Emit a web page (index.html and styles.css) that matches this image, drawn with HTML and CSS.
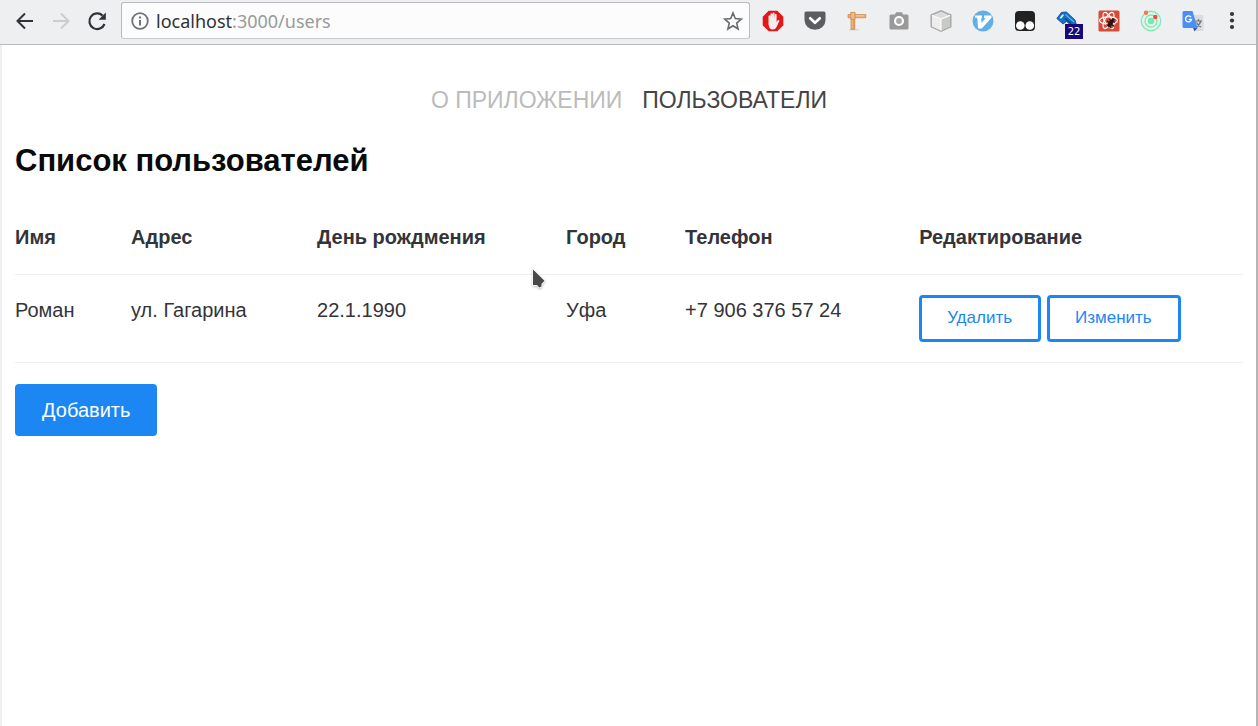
FILE: index.html
```html
<!DOCTYPE html>
<html lang="ru">
<head>
<meta charset="utf-8">
<title>Список пользователей</title>
<link rel="stylesheet" href="styles.css">
</head>
<body>
<div class="window">
  <header class="toolbar">
    <button class="tool back" aria-label="Назад"><svg width="20" height="20" viewBox="0 0 20 20"><path d="M18 10H2.500M10 2.500 2.500 10l7.500 7.500" fill="none" stroke="currentColor" stroke-width="2"/></svg></button>
    <button class="tool forward" aria-label="Вперёд" disabled><svg width="20" height="20" viewBox="0 0 20 20"><path d="M2 10h15.500M10 2.500l7.500 7.500-7.500 7.500" fill="none" stroke="currentColor" stroke-width="2"/></svg></button>
    <button class="tool reload" aria-label="Обновить"><svg width="20" height="20" viewBox="0 0 20 20"><path d="M15.600 4.600A7.800 7.800 0 1 0 17.500 13" fill="none" stroke="currentColor" stroke-width="2.200"/><path d="M18.800 1.500v7.200h-7.200z" fill="currentColor"/></svg></button>
    <div class="address">
      <svg width="20" height="20" viewBox="0 0 20 20"><circle cx="10" cy="10" r="7.800" fill="none" stroke="#6f7378" stroke-width="1.800"/><path d="M10 5.500v2M10 9v5.500" stroke="#6f7378" stroke-width="2"/></svg>
      <a class="url" href="#">localhost<span class="path">:3000/users</span></a>
      <button class="tool star" aria-label="В закладки"><svg width="20" height="20" viewBox="0 0 20 20"><path d="M10 2l2.300 5.600 6 .5-4.600 4 1.400 5.900-5.100-3.200L4.900 18l1.400-5.900-4.600-4 6-.5z" fill="none" stroke="#686b70" stroke-width="1.600"/></svg></button>
    </div>
    <div class="extensions">
      <button class="tool" aria-label="AdBlock"><svg width="22" height="22" viewBox="0 0 22 22"><path d="M6.700 .7h8.600l6 6v8.600l-6 6H6.700l-6-6V6.700z" fill="#e31717"/><path d="M6.500 14V6.200q.9-1.700 1.800 0V9l.2-5q.9-1.600 1.900 0v4.600l.2-5.500q.9-1.200 1.900 0V9l.3-4.600q.9-1.200 1.800 0V12l1.300-1.700q1.600-.7 1.400.7l-2.600 5.700q-1.200 2.800-4 2.800-3.800 0-4.200-5.500z" fill="#f6eeee"/></svg></button>
      <button class="tool" aria-label="Pocket"><svg width="22" height="22" viewBox="0 0 22 22"><path d="M2 1.500h18q1.500 0 1.500 1.500v7a10.500 9.800 0 0 1-21 0V3Q.5 1.500 2 1.500z" fill="#5b5d60"/><path d="M6.200 8.300 11 12.800l4.800-4.500" fill="none" stroke="#fff" stroke-width="2.700" stroke-linecap="round" stroke-linejoin="round"/></svg></button>
      <button class="tool" aria-label="Линейка"><svg width="22" height="22" viewBox="0 0 22 22"><path d="M3 19.800h10" stroke="#d2cbc5" stroke-width="1"/><path d="M5 2.500h3.800v16.800H5z" fill="#e2a062" stroke="#bb793f" stroke-width=".6"/><path d="M2 4.500h17.800v3.300H2z" fill="#e9ae72" stroke="#c9854b" stroke-width=".7"/><path d="M4.800 2.300h4.200v7H4.800z" fill="#edba83" stroke="#c9854b" stroke-width=".6"/><path d="M10 5.800h8" stroke="#f5cb9d"/><path d="M6.200 10v8.500" stroke="#f1bd87"/></svg></button>
      <button class="tool" aria-label="Снимок"><svg width="22" height="22" viewBox="0 0 22 22"><path d="M3 4.500h4l1-2.200h6l1 2.200h4q1.500 0 1.500 1.500v12q0 1.500-1.500 1.500H3Q1.500 19.500 1.500 18V6Q1.500 4.500 3 4.500z" fill="#999"/><circle cx="11" cy="11" r="4" fill="#aaa" stroke="#fff" stroke-width="2.200"/></svg></button>
      <button class="tool" aria-label="Куб"><svg width="22" height="22" viewBox="0 0 22 22"><path d="M11 .8 20.800 5v11.800L11 21.200 1.200 16.800V5z" fill="#dcdcdb" stroke="#aaa" stroke-width="1.500"/><path d="M2 5.400 11 9v11.500l-9-4z" fill="#ededeb"/><path d="M11 9l9-3.600v11.100l-9 4z" fill="#c9c9c8"/><path d="M2 5.400 11 9l9-3.600M11 9v11.500" fill="none" stroke="#fafafa" stroke-width="1.200"/></svg></button>
      <button class="tool" aria-label="Vimium"><svg width="22" height="22" viewBox="0 0 22 22"><circle cx="11" cy="11" r="10.500" fill="#61b0e5"/><path d="M3 5.500h7v2.200H9.300l.2 5.500L13.500 8H12V5.500h7.500v2.200L9.800 18.500H6L5.300 7.700H3z" fill="#fff"/></svg></button>
      <button class="tool" aria-label="Tampermonkey"><svg width="22" height="22" viewBox="0 0 22 22"><rect x="1" y="1" width="20" height="20" rx="4" fill="#222"/><circle cx="6.300" cy="15.500" r="4.300" fill="#fff"/><circle cx="15.800" cy="15.500" r="4.300" fill="#fff"/></svg></button>
      <button class="tool keys" aria-label="Счётчик: 22"><svg width="22" height="22" viewBox="0 0 22 22"><path d="M.8 8.500 5.500 2.300l5-.3 8.500 8 1.500 5-4 1.500-6-5-3.500 2.500z" fill="#126fc6" stroke="#0b4d8f" stroke-width=".8" stroke-linejoin="round"/><path d="M3.500 8 6.300 4.500l1.800.3-2.800 4z" fill="#e9f4fb"/><path d="M9.500 4.500l8.500 7.500" stroke="#5eb0ef" stroke-width="1.300"/><path d="M9 8.500l6 5" stroke="#083d78" stroke-width="1.200"/></svg><span class="badge">22</span></button>
      <button class="tool" aria-label="React"><svg width="22" height="22" viewBox="0 0 22 22"><rect x=".5" y=".5" width="21" height="21" rx="1.500" fill="#d84b37"/><g fill="none" stroke="#fff" stroke-width="1.200"><ellipse cx="10.500" cy="10.500" rx="9" ry="3.700"/><ellipse cx="10.500" cy="10.500" rx="9" ry="3.700" transform="rotate(60 10.500 10.500)"/><ellipse cx="10.500" cy="10.500" rx="9" ry="3.700" transform="rotate(120 10.500 10.500)"/></g><ellipse cx="12.500" cy="13.500" rx="2.200" ry="4" transform="rotate(35 12.500 13.500)" fill="#241515"/><circle cx="15" cy="9.500" r="1.600" fill="#241515"/><path d="M9 11l7.500 5.500M11 9.500l6 3M8.500 14.500l5 3.500" stroke="#241515" stroke-width="1.100"/></svg></button>
      <button class="tool" aria-label="Орбита"><svg width="22" height="22" viewBox="0 0 22 22"><g fill="none" stroke="#7deeb3" stroke-width="1.400"><circle cx="11" cy="11" r="9.700"/><circle cx="11" cy="11" r="6"/></g><circle cx="11" cy="11" r="3.300" fill="#72edac"/><circle cx="6" cy="2.700" r="2.200" fill="#ff744c"/><circle cx="15.300" cy="7" r="2.200" fill="#f24a3b"/></svg></button>
      <button class="tool" aria-label="Переводчик"><svg width="22" height="22" viewBox="0 0 22 22"><path d="M10 5h10q1.500 0 1.500 1.500V21H14z" fill="#d9dbdd"/><path d="M13 11h7M16.500 9v2m2.300 0q-1 4-5 6.500M14.500 12.500q1.500 3 4.500 4.500" fill="none" stroke="#69747b" stroke-width="1.200"/><path d="M11 18h4.500L12.500 21.500z" fill="#3454b7"/><path d="M2 1h8.500l5 17H2Q.5 18 .5 16.500v-14Q.5 1 2 1z" fill="#4c8df6"/><path d="M9 7.200A3 3 0 1 0 9.500 9.500H6.800" fill="none" stroke="#fff" stroke-width="1.300"/></svg></button>
      <button class="tool menu" aria-label="Меню"><svg width="16" height="22" viewBox="0 0 16 22"><g fill="#333639"><circle cx="8" cy="4" r="2.100"/><circle cx="8" cy="10.500" r="2.100"/><circle cx="8" cy="17" r="2.100"/></g></svg></button>
    </div>
  </header>

  <main class="page">
    <nav class="nav">
      <a class="nav-link" href="#">О ПРИЛОЖЕНИИ</a>
      <a class="nav-link active" href="#" aria-current="page">ПОЛЬЗОВАТЕЛИ</a>
    </nav>
    <h1 class="title">Список пользователей</h1>
    <table class="users">
      <colgroup><col class="c-name"><col class="c-address"><col class="c-birthday"><col class="c-city"><col class="c-phone"><col></colgroup>
      <thead>
        <tr><th scope="col">Имя</th><th scope="col">Адрес</th><th scope="col">День рождмения</th><th scope="col">Город</th><th scope="col">Телефон</th><th scope="col">Редактирование</th></tr>
      </thead>
      <tbody>
        <tr>
          <td>Роман</td><td>ул. Гагарина</td><td>22.1.1990</td><td>Уфа</td><td>+7 906 376 57 24</td>
          <td><div class="actions"><button class="btn outline">Удалить</button><button class="btn outline">Изменить</button></div></td>
        </tr>
      </tbody>
    </table>
    <button class="btn primary">Добавить</button>
  </main>
</div>
<svg class="cursor" width="16" height="24" viewBox="0 0 16 24" aria-hidden="true"><path d="M2 1.500V17h4l2.200 2.500 2.300-1V15.500h.5l2.500-2.800z" fill="#484848" stroke="#fff" stroke-width="1.500" paint-order="stroke"/></svg>
</body>
</html>
```

FILE: styles.css
```css
* { box-sizing: border-box; }

body {
  margin: 0;
  background: #fff;
  color: #333439;
  font-family: "Liberation Sans", Arial, sans-serif;
  font-size: 20px;
  line-height: 30px;
}

button {
  font-family: inherit;
  cursor: pointer;
}

.window {
  min-height: 100vh;
  display: flex;
  flex-direction: column;
  border-right: 2px solid #b5b5b5;
}

.toolbar {
  display: flex;
  align-items: center;
  height: 45px;
  padding: 0 16px 3px 15px;
  background: #eeeff1;
  border-bottom: 1px solid #b9babe;
}

.tool {
  display: flex;
  flex: none;
  padding: 0;
  border: 0;
  background: none;
  color: #2f3237;
}

.tool svg, .address svg { display: block; flex: none; }
.forward { margin-left: 16px; color: #cbccce; }
.reload { margin-left: 16px; }

.address {
  display: flex;
  align-items: center;
  flex: 1;
  height: 37px;
  margin-left: 14px;
  padding: 0 6px 0 8px;
  border: 1px solid #b9babe;
  border-bottom-color: #c8c9cb;
  border-radius: 3px;
  background: #fcfcfc;
}

.url {
  flex: 1;
  margin-left: 6px;
  color: #2f3237;
  font: 18px/26px "Noto Sans", sans-serif;
  text-decoration: none;
}

.path { color: #999a9c; }

.extensions {
  display: flex;
  gap: 20px;
  margin-left: 12px;
}

.keys { position: relative; }

.badge {
  position: absolute;
  top: 14px;
  left: 9px;
  width: 18px;
  height: 15px;
  background: #1c0777;
  color: #fff;
  font: 10px/15px "DejaVu Sans", sans-serif;
  text-align: center;
}

.page {
  flex: 1;
  padding: 40px 13px;
  border-left: 2px solid #eeeff1;
}

.nav {
  display: flex;
  justify-content: center;
  gap: 20px;
}

.nav-link {
  color: #bbb;
  font-size: 23px;
  text-decoration: none;
}

.nav-link.active { color: #444; }

.title {
  margin: 26px 0 21px;
  color: #0a0a0a;
  font-size: 31px;
  line-height: 40px;
}

.users {
  width: 100%;
  border-collapse: collapse;
  table-layout: fixed;
}

.users th, .users td {
  padding: 20px 0;
  border-bottom: 1px solid #eee;
  text-align: left;
  vertical-align: top;
}

.users th { padding-bottom: 22px; }

.c-name { width: 9.45%; }
.c-address { width: 15.15%; }
.c-birthday { width: 20.28%; }
.c-city { width: 9.69%; }
.c-phone { width: 19.06%; }

.actions {
  display: flex;
  gap: 6px;
}

.btn {
  border-radius: 4px;
  line-height: 30px;
}

.outline {
  padding: 5px 26px 6px 25px;
  border: 3px solid #1c86f2;
  background: #fff;
  color: #1c86f2;
  font-size: 17px;
}

.primary {
  margin-top: 21px;
  padding: 11px 27px;
  border: 0;
  background: #1c86f2;
  color: #fff;
  font-size: 20px;
}

.cursor {
  position: absolute;
  top: 268px;
  left: 531px;
  filter: drop-shadow(0 1px 1px #0004);
  pointer-events: none;
}
```
